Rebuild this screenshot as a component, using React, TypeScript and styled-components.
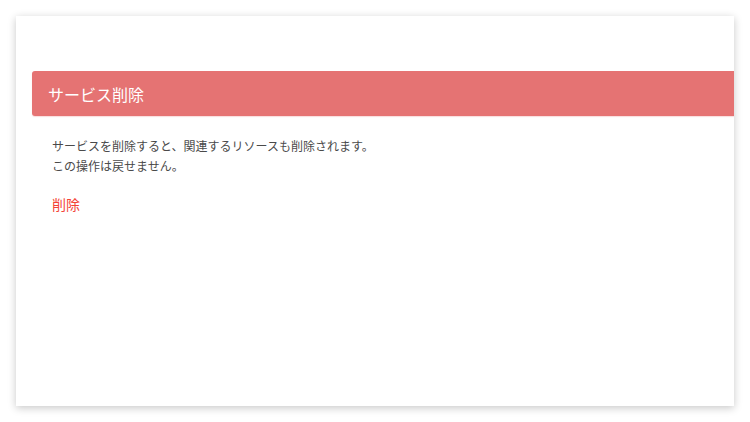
import styled, { createGlobalStyle } from "styled-components";

const GlobalStyle = createGlobalStyle`
  html, body {
    margin: 0;
    padding: 0;
    background: #ffffff;
    font-family: "Noto Sans CJK JP", "Noto Sans", sans-serif;
  }
`;

const Page = styled.div`
  width: 750px;
  height: 422px;
  box-sizing: border-box;
  padding: 16px;
  overflow: hidden;
`;

const Card = styled.section`
  height: 390px;
  box-sizing: border-box;
  background: #ffffff;
  box-shadow: 0 2px 8px rgba(0, 0, 0, 0.22);
  padding: 55px 0 0 16px;
  overflow: hidden;
`;

const Header = styled.header`
  height: 45px;
  display: flex;
  align-items: center;
  padding: 0 16px;
  background: #e57373;
  border-radius: 3px 0 0 3px;
  box-shadow: 0 1px 1px rgba(229, 115, 115, 0.25);
`;

const Title = styled.h2`
  margin: 0;
  font-size: 16px;
  font-weight: 400;
  color: #ffffff;
`;

const Body = styled.div`
  padding: 20px 16px 0 20px;
`;

const Message = styled.p`
  margin: 0;
  font-size: 12px;
  line-height: 20px;
  color: #4a4a4a;
`;

const DangerLink = styled.a`
  display: inline-block;
  margin-top: 18px;
  font-size: 14px;
  line-height: 20px;
  color: #f44336;
  cursor: pointer;
`;

export default function App() {
  return (
    <>
      <GlobalStyle />
      <Page>
        <Card>
          <Header>
            <Title>サービス削除</Title>
          </Header>
          <Body>
            <Message>
              サービスを削除すると、関連するリソースも削除されます。
              <br />
              この操作は戻せません。
            </Message>
            <DangerLink>削除</DangerLink>
          </Body>
        </Card>
      </Page>
    </>
  );
}
